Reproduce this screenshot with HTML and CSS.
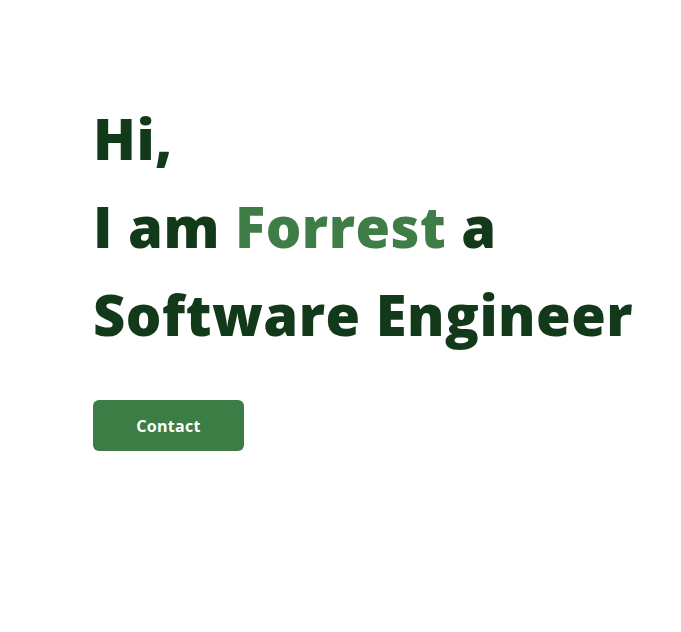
FILE: index.html
```html
<!DOCTYPE html>
<html lang="en">
<head>
<meta charset="utf-8">
<title>Forrest</title>
<link rel="stylesheet" href="styles.css">
</head>
<body>
<main class="hero">
  <h1 class="headline">
    <span class="line">Hi,</span>
    <span class="line">I am <span class="name">Forrest</span> a</span>
    <span class="line">Software Engineer</span>
  </h1>
  <a class="btn" href="#">Contact</a>
</main>
</body>
</html>
```
FILE: styles.css
```css
html, body {
  margin: 0;
  padding: 0;
  background: #ffffff;
}
.hero {
  padding: 94px 0 0 93px;
  display: flex;
  flex-direction: column;
  align-items: flex-start;
  font-family: "Open Sans", "Noto Sans", sans-serif;
}
.headline {
  margin: 0;
  font-size: 56px;
  font-weight: 800;
  line-height: 88px;
  color: #123a1a;
  letter-spacing: 0.5px;
}
.line {
  display: block;
}
.name {
  color: #3e7d46;
}
.btn {
  margin-top: 42px;
  width: 151px;
  height: 51px;
  border-radius: 6px;
  background: #3b7d45;
  color: #ffffff;
  font-size: 16px;
  font-weight: 700;
  letter-spacing: 0.3px;
  text-decoration: none;
  display: flex;
  align-items: center;
  justify-content: center;
}
```
